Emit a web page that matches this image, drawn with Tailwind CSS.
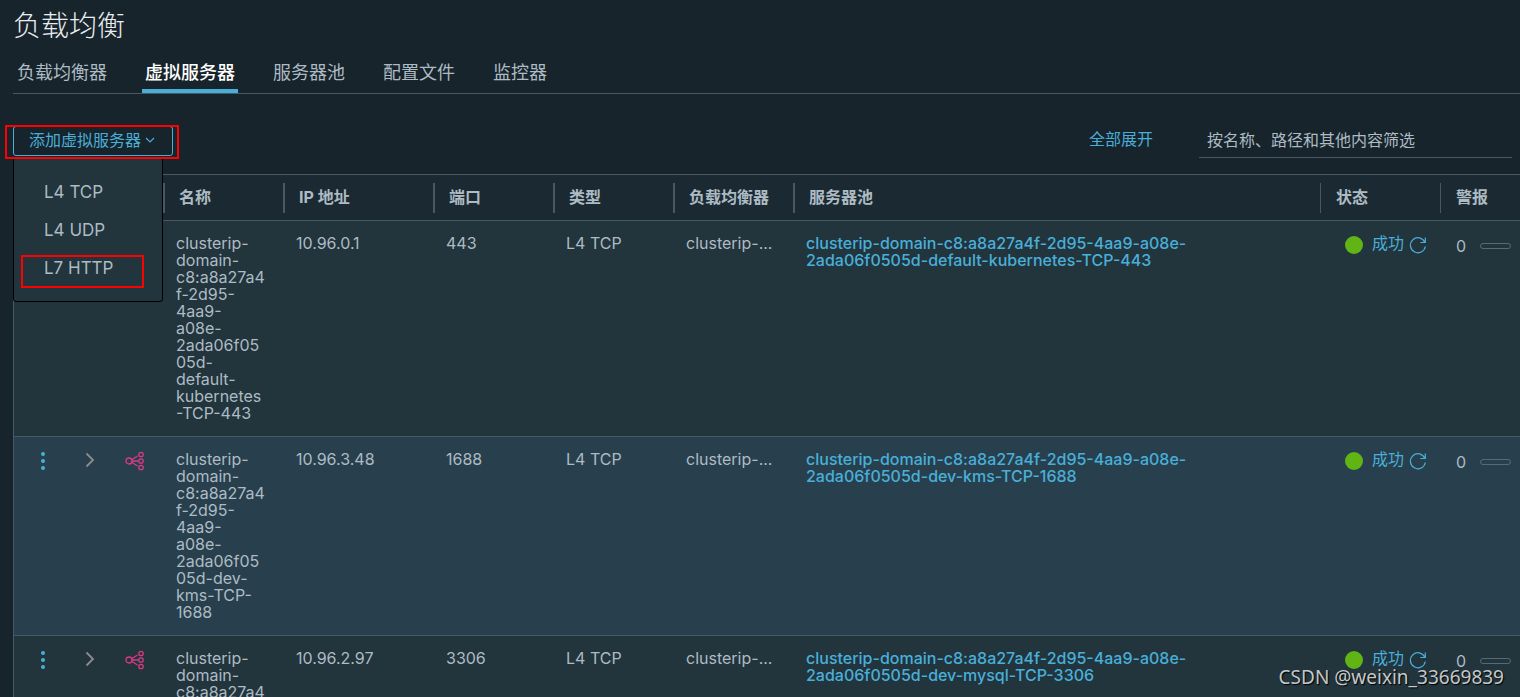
<!DOCTYPE html>
<html lang="zh-CN">
<head>
  <meta charset="UTF-8" />
  <meta name="viewport" content="width=device-width, initial-scale=1.0"/>
  <title>负载均衡</title>
  <script src="https://cdn.jsdelivr.net/npm/@tailwindcss/browser@4"></script>
</head>

<body class="relative h-screen overflow-hidden bg-[#17242b] font-['Inter','Noto_Sans_CJK_SC',sans-serif] text-base text-[#adbbc4]">

<!-- Shared icons -->
<svg class="hidden">
  <symbol id="dots" viewBox="0 0 6 20">
    <circle cx="3" cy="3" r="2"/><circle cx="3" cy="10" r="2"/><circle cx="3" cy="17" r="2"/>
  </symbol>
  <symbol id="chevron" viewBox="0 0 10 16">
    <path d="M1.500 1.500 8 8l-6.500 6.500" fill="none" stroke="currentColor" stroke-width="1.800"/>
  </symbol>
  <symbol id="balancer" viewBox="0 0 20 20">
    <g fill="none" stroke="currentColor" stroke-width="1.300">
      <circle cx="4" cy="10" r="3"/>
      <circle cx="16" cy="3.500" r="2.200"/><circle cx="16" cy="10" r="2.200"/><circle cx="16" cy="16.500" r="2.200"/>
      <path d="M6.700 8.700 12.500 5M7 10h6M6.700 11.300l5.800 3.700"/>
    </g>
  </symbol>
  <symbol id="refresh" viewBox="0 0 18 18">
    <path d="M15.800 6.300A7.500 7.500 0 1 0 16.300 10.500M16.300 1.500v5h-5" fill="none" stroke="currentColor" stroke-width="1.200"/>
  </symbol>
</svg>

<!-- Title -->
<header class="pl-[13px]">
  <h1 class="pt-[5px] text-[28px] leading-[43px] font-light text-[#eaedf0]">负载均衡</h1>

  <!-- Tabs -->
  <nav class="flex h-[46px] gap-8 border-b border-[#495865] pl-px text-lg">
    <a href="#" class="flex h-[45px] items-center px-[3px] pt-1">负载均衡器</a>
    <a href="#" class="flex h-[45px] items-center border-b-4 border-[#49afd9] px-[3px] pt-2 font-medium text-white">虚拟服务器</a>
    <a href="#" class="flex h-[45px] items-center px-[3px] pt-1">服务器池</a>
    <a href="#" class="flex h-[45px] items-center px-[3px] pt-1">配置文件</a>
    <a href="#" class="flex h-[45px] items-center px-[3px] pt-1">监控器</a>
  </nav>
</header>

<!-- Toolbar -->
<div class="flex h-20 items-start justify-between pt-8 pr-2 pl-[13px]">
  <div class="relative">
    <button type="button" class="flex h-[30px] w-40 items-center gap-1 rounded-[3px] border border-[#49afd9] pb-0.5 pl-[15px] text-[#49afd9]">
      添加虚拟服务器
      <svg class="h-2 w-2.5" viewBox="0 0 10 8"><path d="M1 2l4 4 4-4" fill="none" stroke="currentColor" stroke-width="1.200"/></svg>
    </button>
    <span class="pointer-events-none absolute -top-px -left-2 z-20 h-[34px] w-[174px] border-2 border-[#ff0000]"></span>

    <!-- Menu -->
    <div class="absolute top-[31px] left-0 z-10 flex w-[150px] flex-col rounded-[3px] border border-black bg-[#22343c] pt-4 pb-[13px] text-[17px]">
      <button type="button" class="h-[38px] pl-[30px] text-left">L4 TCP</button>
      <button type="button" class="h-[38px] pl-[30px] text-left">L4 UDP</button>
      <button type="button" class="h-[38px] pl-[30px] text-left">L7 HTTP</button>
      <span class="pointer-events-none absolute bottom-[13px] left-[7px] h-[33px] w-[123px] border-2 border-[#ff0000]"></span>
    </div>
  </div>

  <div class="flex items-start">
    <a href="#" class="mr-[46px] leading-[26px] text-[#49afd9]">全部展开</a>
    <input type="text" aria-label="筛选" placeholder="按名称、路径和其他内容筛选" class="h-8 w-[313px] border-b border-[#495865] px-2 pb-[3px] outline-none placeholder:text-[#adbbc4]">
  </div>
</div>

<!-- Virtual servers -->
<div class="ml-[13px] border-t border-l border-[#495865]">
  <table class="w-full table-fixed border-collapse">
    <colgroup>
      <col class="w-[56px]"><col class="w-10"><col class="w-[53px]">
      <col class="w-[120px]"><col class="w-[150px]"><col class="w-[120px]"><col class="w-[120px]"><col class="w-[120px]">
      <col><col class="w-[120px]"><col class="w-20">
    </colgroup>
    <thead class="bg-[#1b2a32] text-left leading-7">
      <tr class="border-b border-[#495865]">
        <th></th>
        <th></th>
        <th></th>
        <th class="pt-2 pb-[7px]"><div class="border-l-2 border-[#495865] pb-0.5 pl-[14px]">名称</div></th>
        <th class="pt-2 pb-[7px]"><div class="border-l-2 border-[#495865] pb-0.5 pl-[14px]">IP 地址</div></th>
        <th class="pt-2 pb-[7px]"><div class="border-l-2 border-[#495865] pb-0.5 pl-[14px]">端口</div></th>
        <th class="pt-2 pb-[7px]"><div class="border-l-2 border-[#495865] pb-0.5 pl-[14px]">类型</div></th>
        <th class="pt-2 pb-[7px]"><div class="border-l-2 border-[#495865] pb-0.5 pl-[14px]">负载均衡器</div></th>
        <th class="pt-2 pb-[7px]"><div class="border-l-2 border-[#495865] pb-0.5 pl-[14px]">服务器池</div></th>
        <th class="pt-2 pb-[7px]"><div class="border-l border-[#495865] pb-0.5 pl-[15px]">状态</div></th>
        <th class="pt-2 pb-[7px]"><div class="border-l border-[#495865] pb-0.5 pl-[15px]">警报</div></th>
      </tr>
    </thead>
    <tbody class="align-top leading-[17px]">
      <tr class="border-b border-[#495865] bg-[#22343c]">
        <td></td>
        <td></td>
        <td></td>
        <td class="py-[14px] pl-[13px]">clusterip-<br>domain-<br>c8:a8a27a4<br>f-2d95-<br>4aa9-<br>a08e-<br>2ada06f05<br>05d-<br>default-<br>kubernetes<br>-TCP-443</td>
        <td class="py-[14px] pl-[13px]">10.96.0.1</td>
        <td class="py-[14px] pl-[13px]">443</td>
        <td class="py-[14px] pl-[13px]">L4 TCP</td>
        <td class="py-[14px] pl-[13px]">clusterip-...</td>
        <td class="py-[14px] pl-[13px]"><a href="#" class="font-medium text-[#49afd9]">clusterip-domain-c8:a8a27a4f-2d95-4aa9-a08e-<br>2ada06f0505d-default-kubernetes-TCP-443</a></td>
        <td class="py-[14px] pl-[25px]">
          <div class="flex h-5 items-center text-[#49afd9]">
            <span class="mr-[9px] size-[18px] rounded-full bg-[#60b515]"></span>
            <a href="#" class="pb-[3px]">成功</a>
            <svg class="ml-[5px] size-[18px]"><use href="#refresh"/></svg>
          </div>
        </td>
        <td class="py-[14px] pl-4">
          <div class="flex h-[22px] items-center justify-between pr-[9px]">0<span class="h-1.5 w-[31px] rounded-sm border border-[#566b78]"></span></div>
        </td>
      </tr>
      <tr class="border-b border-[#495865] bg-[#28404d]">
        <td class="pt-[14px] pl-0.5"><button type="button" aria-label="操作" class="mx-auto block text-[#49afd9]"><svg class="h-5 w-1.5 fill-current"><use href="#dots"/></svg></button></td>
        <td class="pt-[15px]"><button type="button" aria-label="展开" class="mx-auto block text-[#8c8c8c]"><svg class="h-4 w-2.5"><use href="#chevron"/></svg></button></td>
        <td class="pt-[14px] pr-[3px]"><svg class="mx-auto size-5 text-[#d93a85]"><use href="#balancer"/></svg></td>
        <td class="py-[14px] pl-[13px]">clusterip-<br>domain-<br>c8:a8a27a4<br>f-2d95-<br>4aa9-<br>a08e-<br>2ada06f05<br>05d-dev-<br>kms-TCP-<br>1688</td>
        <td class="py-[14px] pl-[13px]">10.96.3.48</td>
        <td class="py-[14px] pl-[13px]">1688</td>
        <td class="py-[14px] pl-[13px]">L4 TCP</td>
        <td class="py-[14px] pl-[13px]">clusterip-...</td>
        <td class="py-[14px] pl-[13px]"><a href="#" class="font-medium text-[#49afd9]">clusterip-domain-c8:a8a27a4f-2d95-4aa9-a08e-<br>2ada06f0505d-dev-kms-TCP-1688</a></td>
        <td class="py-[14px] pl-[25px]">
          <div class="flex h-5 items-center text-[#49afd9]">
            <span class="mr-[9px] size-[18px] rounded-full bg-[#60b515]"></span>
            <a href="#" class="pb-[3px]">成功</a>
            <svg class="ml-[5px] size-[18px]"><use href="#refresh"/></svg>
          </div>
        </td>
        <td class="py-[14px] pl-4">
          <div class="flex h-[22px] items-center justify-between pr-[9px]">0<span class="h-1.5 w-[31px] rounded-sm border border-[#566b78]"></span></div>
        </td>
      </tr>
      <tr class="border-b border-[#495865] bg-[#22343c]">
        <td class="pt-[14px] pl-0.5"><button type="button" aria-label="操作" class="mx-auto block text-[#49afd9]"><svg class="h-5 w-1.5 fill-current"><use href="#dots"/></svg></button></td>
        <td class="pt-[15px]"><button type="button" aria-label="展开" class="mx-auto block text-[#8c8c8c]"><svg class="h-4 w-2.5"><use href="#chevron"/></svg></button></td>
        <td class="pt-[14px] pr-[3px]"><svg class="mx-auto size-5 text-[#d93a85]"><use href="#balancer"/></svg></td>
        <td class="py-[14px] pl-[13px]">clusterip-<br>domain-<br>c8:a8a27a4</td>
        <td class="py-[14px] pl-[13px]">10.96.2.97</td>
        <td class="py-[14px] pl-[13px]">3306</td>
        <td class="py-[14px] pl-[13px]">L4 TCP</td>
        <td class="py-[14px] pl-[13px]">clusterip-...</td>
        <td class="py-[14px] pl-[13px]"><a href="#" class="font-medium text-[#49afd9]">clusterip-domain-c8:a8a27a4f-2d95-4aa9-a08e-<br>2ada06f0505d-dev-mysql-TCP-3306</a></td>
        <td class="py-[14px] pl-[25px]">
          <div class="flex h-5 items-center text-[#49afd9]">
            <span class="mr-[9px] size-[18px] rounded-full bg-[#60b515]"></span>
            <a href="#" class="pb-[3px]">成功</a>
            <svg class="ml-[5px] size-[18px]"><use href="#refresh"/></svg>
          </div>
        </td>
        <td class="py-[14px] pl-4">
          <div class="flex h-[22px] items-center justify-between pr-[9px]">0<span class="h-1.5 w-[31px] rounded-sm border border-[#566b78]"></span></div>
        </td>
      </tr>
    </tbody>
  </table>
</div>

<!-- Watermark -->
<p class="absolute right-4 bottom-1.5 font-['Noto_Sans',sans-serif] text-[19px] text-[#c4c8ca] text-shadow-[1px_1px_1px_#000]">CSDN @weixin_33669839</p>

</body>
</html>
